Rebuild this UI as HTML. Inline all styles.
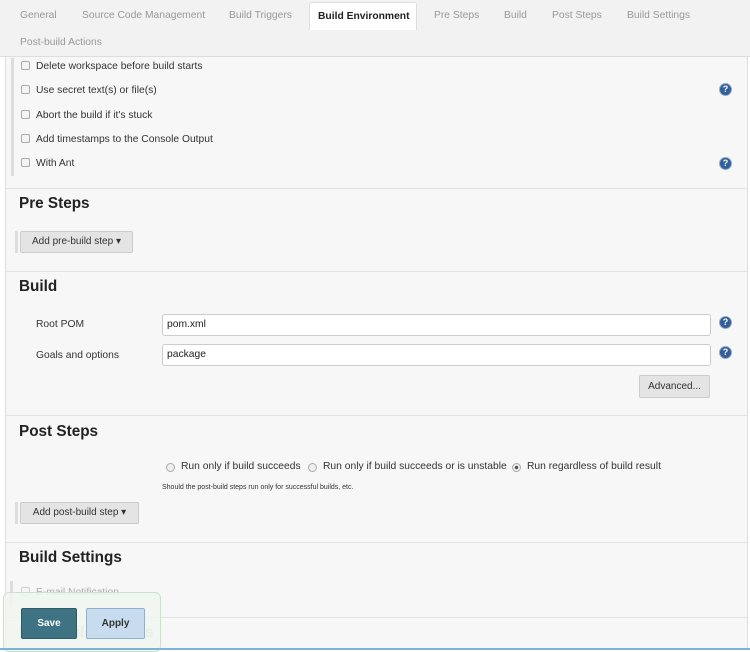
<!DOCTYPE html>
<html><head><style>
*{box-sizing:border-box;margin:0;padding:0}
body{width:750px;height:650px;overflow:hidden;background:#fff;font-family:"Liberation Sans",sans-serif;font-size:10.3px;color:#333;position:relative}
.a{position:absolute}
#tabs{left:0;top:0;width:750px;height:57px;background:#f2f2f2;border-bottom:1px solid #ddd}
.tab{position:absolute;color:#999;font-size:10.3px}
#main{left:5px;top:57px;width:743px;height:593px;background:#f7f7f7;border-left:1px solid #ddd;border-right:1px solid #ddd}
.cb{position:absolute;width:9px;height:9px;border:1px solid #aaa;border-radius:2px;background:#f4f4f4}
.lbl{position:absolute;color:#333;white-space:nowrap}
.help{position:absolute;width:13px;height:13px;border-radius:50%;background:#2f5f9c;border:1px solid #9ab;color:#fff;font-size:9px;font-weight:bold;text-align:center;line-height:11px}
.hr{position:absolute;left:5px;width:743px;height:1px;background:#e2e2e2}
h2{position:absolute;font-size:15.3px;font-weight:bold;color:#222}
.btn{position:absolute;background:#e4e4e4;border:1px solid #ccc;border-radius:2px;color:#333;font-size:10px;text-align:center}
.inp{position:absolute;left:162px;width:549px;height:22px;background:#fff;border:1px solid #ccc;border-radius:3px;padding:4px;font-size:10.3px;color:#222}
.rad{position:absolute;width:9px;height:9px;border-radius:50%;border:1px solid #aaa;background:#eee}
</style></head><body>
<div id="tabs" class="a">
<div class="tab" style="left:20px;top:10px">General</div>
<div class="tab" style="left:82px;top:10px">Source Code Management</div>
<div class="tab" style="left:229px;top:10px">Build Triggers</div>
<div class="a" style="left:309px;top:2px;width:108px;height:28px;background:#fff;border:1px solid #ddd;border-bottom:none;border-radius:3px 3px 0 0;font-weight:bold;color:#222;padding:8px 0 0 8px;white-space:nowrap">Build Environment</div>
<div class="tab" style="left:434px;top:10px">Pre Steps</div>
<div class="tab" style="left:504px;top:10px">Build</div>
<div class="tab" style="left:552px;top:10px">Post Steps</div>
<div class="tab" style="left:627px;top:10px">Build Settings</div>
<div class="tab" style="left:20px;top:37px">Post-build Actions</div>
</div>
<div id="main" class="a"></div>
<div class="a" style="left:11px;top:58px;width:3px;height:118px;background:#ddd"></div>
<div class="cb" style="left:21px;top:61px"></div><div class="lbl" style="left:36px;top:61px">Delete workspace before build starts</div>
<div class="cb" style="left:21px;top:85px"></div><div class="lbl" style="left:36px;top:85px">Use secret text(s) or file(s)</div>
<div class="help" style="left:719px;top:83px">?</div>
<div class="cb" style="left:21px;top:110px"></div><div class="lbl" style="left:36px;top:110px">Abort the build if it's stuck</div>
<div class="cb" style="left:21px;top:134px"></div><div class="lbl" style="left:36px;top:134px">Add timestamps to the Console Output</div>
<div class="cb" style="left:21px;top:158px"></div><div class="lbl" style="left:36px;top:158px">With Ant</div>
<div class="help" style="left:719px;top:157px">?</div>
<div class="hr" style="top:188px"></div>
<h2 style="left:19px;top:195px">Pre Steps</h2>
<div class="a" style="left:15px;top:231px;width:3px;height:22px;background:#ddd"></div>
<div class="btn" style="left:20px;top:231px;width:113px;height:22px;line-height:20px">Add pre-build step &#9662;</div>
<div class="hr" style="top:271px"></div>
<h2 style="left:19px;top:278px">Build</h2>
<div class="lbl" style="left:36px;top:319px">Root POM</div>
<div class="inp" style="top:314px">pom.xml</div>
<div class="help" style="left:719px;top:316px">?</div>
<div class="lbl" style="left:36px;top:350px">Goals and options</div>
<div class="inp" style="top:344px">package</div>
<div class="help" style="left:719px;top:346px">?</div>
<div class="btn" style="left:639px;top:375px;width:71px;height:23px;line-height:21px">Advanced...</div>
<div class="hr" style="top:415px"></div>
<h2 style="left:19px;top:423px">Post Steps</h2>
<div class="rad" style="left:166px;top:463px"></div><div class="lbl" style="left:181px;top:461px">Run only if build succeeds</div>
<div class="rad" style="left:308px;top:463px"></div><div class="lbl" style="left:323px;top:461px">Run only if build succeeds or is unstable</div>
<div class="rad" style="left:512px;top:463px;background:radial-gradient(#555 30%,#eee 40%)"></div><div class="lbl" style="left:527px;top:461px">Run regardless of build result</div>
<div class="lbl" style="left:162px;top:484px;font-size:7px">Should the post-build steps run only for successful builds, etc.</div>
<div class="a" style="left:15px;top:502px;width:3px;height:22px;background:#ddd"></div>
<div class="btn" style="left:20px;top:502px;width:119px;height:22px;line-height:20px">Add post-build step &#9662;</div>
<div class="hr" style="top:542px"></div>
<h2 style="left:19px;top:549px">Build Settings</h2>
<div class="a" style="left:10px;top:581px;width:3px;height:24px;background:#ddd"></div>
<div class="cb" style="left:21px;top:587px;opacity:.5"></div><div class="lbl" style="left:36px;top:587px;color:#aaa">E-mail Notification</div>
<div class="hr" style="top:617px"></div>
<h2 style="left:19px;top:624px;color:#bbb">Post-build Actions</h2>
<div class="a" style="left:3px;top:592px;width:158px;height:60px;background:rgba(240,246,240,.85);border:1px solid #cde0cd;border-radius:6px"></div>
<div class="a" style="left:21px;top:608px;width:56px;height:31px;background:#3e7384;border:1px solid #2f5a68;border-radius:2px;color:#fff;font-weight:bold;font-size:10px;text-align:center;line-height:29px">Save</div>
<div class="a" style="left:86px;top:608px;width:59px;height:31px;background:#c8dcf0;border:1px solid #8fb0d0;border-radius:2px;color:#333;font-weight:bold;font-size:10px;text-align:center;line-height:29px">Apply</div>
<div class="a" style="left:0;top:648px;width:750px;height:2px;background:#7ab4d8"></div>
</body></html>
